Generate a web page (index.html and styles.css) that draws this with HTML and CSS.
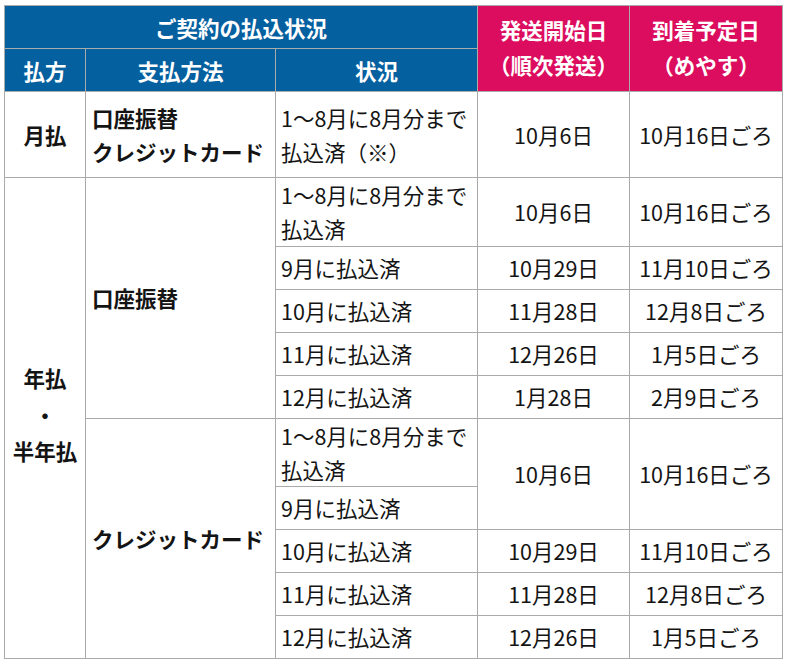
FILE: index.html
```html
<!DOCTYPE html>
<html lang="ja">
<head>
<meta charset="utf-8">
<title>ご契約の払込状況</title>
<link rel="stylesheet" href="styles.css">
</head>
<body>
<div class="schedule">
  <div class="cell head blue span-c3">ご契約の払込状況</div>
  <div class="cell head pink span-r2"><div>発送開始日<br><span class="paren">（</span>順次発送<span class="paren">）</span></div></div>
  <div class="cell head pink span-r2"><div>到着予定日<br><span class="paren">（</span>めやす<span class="paren">）</span></div></div>
  <div class="cell head blue">払方</div>
  <div class="cell head blue">支払方法</div>
  <div class="cell head blue">状況</div>

  <div class="cell plan">月払</div>
  <div class="cell method">口座振替<br>クレジットカード</div>
  <div class="cell status">1～8月に8月分まで<br>払込済（※）</div>
  <div class="cell date">10月6日</div>
  <div class="cell date">10月16日ごろ</div>

  <div class="cell plan span-r10 tall">年払<br>・<br>半年払</div>
  <div class="cell method span-r5">口座振替</div>
  <div class="cell status">1～8月に8月分まで<br>払込済</div>
  <div class="cell date">10月6日</div>
  <div class="cell date">10月16日ごろ</div>
  <div class="cell status">9月に払込済</div>
  <div class="cell date">10月29日</div>
  <div class="cell date">11月10日ごろ</div>
  <div class="cell status">10月に払込済</div>
  <div class="cell date">11月28日</div>
  <div class="cell date">12月8日ごろ</div>
  <div class="cell status">11月に払込済</div>
  <div class="cell date">12月26日</div>
  <div class="cell date">1月5日ごろ</div>
  <div class="cell status">12月に払込済</div>
  <div class="cell date">1月28日</div>
  <div class="cell date">2月9日ごろ</div>

  <div class="cell method span-r5">クレジットカード</div>
  <div class="cell status">1～8月に8月分まで<br>払込済</div>
  <div class="cell date span-r2">10月6日</div>
  <div class="cell date span-r2">10月16日ごろ</div>
  <div class="cell status">9月に払込済</div>
  <div class="cell status">10月に払込済</div>
  <div class="cell date">10月29日</div>
  <div class="cell date">11月10日ごろ</div>
  <div class="cell status">11月に払込済</div>
  <div class="cell date">11月28日</div>
  <div class="cell date">12月8日ごろ</div>
  <div class="cell status">12月に払込済</div>
  <div class="cell date">12月26日</div>
  <div class="cell date">1月5日ごろ</div>
</div>
</body>
</html>
```

FILE: styles.css
```css
html, body {
  margin: 0;
  background: #ffffff;
}

body {
  padding: 5px 0 0 4px;
  font-family: "Noto Sans CJK JP", "Noto Sans", sans-serif;
  font-size: 21.5px;
  color: #141414;
}

.schedule {
  display: grid;
  width: 779px;
  box-sizing: border-box;
  grid-template-columns: 80px 189px 201px 151px 152px;
  grid-template-rows: 42px 42px 85px 68px 42px 42px 42px 42px 67px 42px 42px 42px 42px;
  gap: 1px;
  padding: 1px;
  background: #aaaaaa;
}

.cell {
  display: flex;
  align-items: center;
  justify-content: center;
  text-align: center;
  background: #ffffff;
  line-height: 34px;
}

.head {
  color: #ffffff;
  font-weight: 700;
  line-height: 35px;
}

.blue { background: #0560a0; }
.pink {
  background: #dc0d5e;
  padding-bottom: 4px;
}

.paren {
  font-feature-settings: "halt";
}

.span-c3 { grid-column: span 3; }
.span-r2 { grid-row: span 2; }
.span-r5 { grid-row: span 5; }
.span-r10 { grid-row: span 10; }

.plan {
  font-weight: 700;
}
.tall {
  line-height: 36.5px;
  padding-bottom: 6px;
}

.method {
  justify-content: flex-start;
  text-align: left;
  padding-left: 6px;
  font-weight: 700;
}

.status {
  justify-content: flex-start;
  text-align: left;
  padding-left: 5px;
}
```
